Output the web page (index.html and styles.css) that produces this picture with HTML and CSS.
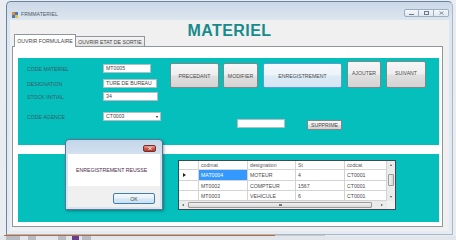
FILE: index.html
```html
<!DOCTYPE html>
<html>
<head>
<meta charset="utf-8">
<title>FRMMATERIEL</title>
<link rel="stylesheet" href="styles.css">
</head>
<body>
<div class="screen">
  <div class="window">
    <div class="titlebar">
      <svg class="appicon" width="6" height="6" viewBox="0 0 6 6">
        <rect x="0" y="0" width="3" height="3" fill="#e58a2a"/>
        <rect x="3" y="0" width="3" height="3" fill="#3d7bd1"/>
        <rect x="0" y="3" width="3" height="3" fill="#3d7bd1"/>
        <rect x="3" y="3" width="3" height="3" fill="#e9c23a"/>
      </svg>
      <span class="wintitle">FRMMATERIEL</span>
      <div class="wctrls">
        <span class="wbtn"><span class="g-min"></span></span>
        <span class="wbtn"><span class="g-max"></span></span>
        <span class="wbtn">
          <svg width="5" height="4" viewBox="0 0 5 4"><path d="M0.5 0.5L4.5 3.5M4.5 0.5L0.5 3.5" stroke="#6b7a8a" stroke-width="0.8"/></svg>
        </span>
      </div>
    </div>
    <div class="client">
      <div class="heading">MATERIEL</div>
      <div class="tabs">
        <div class="tab tab-active">OUVRIR FORMULAIRE</div>
        <div class="tab tab-other">OUVRIR ETAT DE SORTIE</div>
      </div>
      <div class="tabpage">
        <div class="panel panel-form">
          <div class="form">
            <div class="frow r1"><span class="lbl">CODE MATERIEL</span><span class="inp w48">MT0005</span></div>
            <div class="frow r2"><span class="lbl">DESIGNATION</span><span class="inp w54">TURE DE BUREAU</span></div>
            <div class="frow r3"><span class="lbl">STOCK INITIAL</span><span class="inp w55">34</span></div>
            <div class="frow r4"><span class="lbl">CODE AGENCE</span><span class="inp combo w58">CT0003<span class="caret"></span></span></div>
          </div>
          <div class="actions">
            <div class="btnrow">
              <span class="btn b-prec">PRECEDANT</span>
              <span class="btn b-mod">MODIFIER</span>
              <span class="btn b-enr">ENREGISTREMENT</span>
              <span class="btn b-ajo">AJOUTER</span>
              <span class="btn b-sui">SUIVANT</span>
            </div>
            <div class="delrow">
              <span class="inp w48 del-inp"></span>
              <span class="btn b-sup">SUPPRIME</span>
            </div>
          </div>
        </div>
        <div class="panel panel-grid">
          <div class="grid">
            <div class="cell rh"></div>
            <div class="cell hd">codmat</div>
            <div class="cell hd">designation</div>
            <div class="cell hd">St</div>
            <div class="cell hd">codcat</div>
            <div class="vscroll">
              <span class="arr-up"></span>
              <span class="vthumb"></span>
              <span class="arr-down"></span>
            </div>

            <div class="cell rh"><span class="rowmark"></span></div>
            <div class="cell sel">MAT0004</div>
            <div class="cell">MOTEUR</div>
            <div class="cell">4</div>
            <div class="cell">CT0001</div>

            <div class="cell rh"></div>
            <div class="cell">MT0002</div>
            <div class="cell">COMPTEUR</div>
            <div class="cell">1567</div>
            <div class="cell">CT0001</div>

            <div class="cell rh"></div>
            <div class="cell">MT0003</div>
            <div class="cell">VEHICULE</div>
            <div class="cell">6</div>
            <div class="cell">CT0001</div>

            <div class="hscroll">
              <span class="arr-left"></span>
              <span class="hthumb"><span class="grip"></span></span>
              <span class="arr-right"></span>
            </div>
            <div class="corner"></div>
          </div>
        </div>
      </div>
    </div>
  </div>

  <div class="dialog">
    <div class="dtitle">
      <span class="dclose">
        <svg width="4" height="3" viewBox="0 0 4 3"><path d="M0.4 0.3L3.6 2.7M3.6 0.3L0.4 2.7" stroke="#fff" stroke-width="0.9"/></svg>
      </span>
    </div>
    <div class="dbody">ENREGISTREMENT REUSSE</div>
    <div class="dfoot"><span class="btn okbtn">OK</span></div>
  </div>
</div>
<div class="taskbar">
  <div class="tline"><span class="tl-orange"></span><span class="tl-gray"></span></div>
  <div class="titems">
    <span class="ti ti1"></span>
    <span class="ti ti2"></span>
    <span class="ti ti3"></span>
    <span class="ti ti4"></span>
    <span class="ti ti5"></span>
  </div>
</div>
</body>
</html>
```
FILE: styles.css
```css
* { box-sizing: border-box; margin: 0; padding: 0; }
html, body { width: 456px; height: 240px; overflow: hidden; }
body {
  background: #e9edf1;
  font-family: "Liberation Sans", Arial, sans-serif;
  color: #333;
}
.screen { position: relative; height: 235px; padding: 1px 0 0 6px; }

/* main window */
.window {
  width: 447px; height: 234px;
  border: 1px solid;
  border-color: #6c849e #a7b8ca #a7b8ca #6c849e;
  border-radius: 5px 5px 0 0;
  background: linear-gradient(#cbd8e6, #dce6ef 18px, #e4ebf2);
  display: flex; flex-direction: column;
}
.titlebar {
  height: 18px; flex: none;
  display: flex; align-items: flex-start;
  padding: 7px 3px 0 5px;
}
.appicon { margin-top: 3px; flex: none; }
.wintitle {
  margin: 2px 0 0 3px;
  font-size: 5.2px; line-height: 6px; color: #4f5b68;
}
.wctrls { margin-left: auto; display: flex; }
.wbtn {
  width: 15px; height: 8px;
  border: 1px solid #9eaec0;
  background: linear-gradient(#f5f8fb, #dfe7ef);
  display: flex; align-items: center; justify-content: center;
}
.wbtn:first-child { border-radius: 2px 0 0 2px; }
.wbtn:last-child { border-radius: 0 2px 2px 0; }
.wbtn + .wbtn { border-left: none; }
.g-min { width: 5px; height: 1px; background: #6b7a8a; margin-top: 2px; }
.g-max { width: 5px; height: 4px; border: 1px solid #6b7a8a; }

.client {
  flex: 1;
  margin: 0 3px 3px 3px;
  background: #f0f0f0;
  display: flex; flex-direction: column;
}
.heading {
  height: 14px; flex: none;
  padding-top: 4px;
  text-align: center;
  font-size: 16px; line-height: 14px; font-weight: bold;
  letter-spacing: 0.4px;
  color: #178b8c;
}
.tabs {
  height: 12px; flex: none;
  display: flex; align-items: flex-end;
  padding-left: 4px;
  position: relative; z-index: 1;
}
.tab {
  border: 1px solid #8f969e; border-bottom: none;
  font-size: 5.2px; line-height: 6px; color: #444;
  display: flex; align-items: center; justify-content: center;
  white-space: nowrap;
}
.tab-active {
  width: 62px; height: 13px; margin-bottom: -1px;
  background: #fff;
  align-items: flex-end; padding-bottom: 3px;
}
.tab-other {
  width: 69px; height: 10px;
  border-left: none;
  background: linear-gradient(#f5f5f5, #e2e2e2);
}
.tabpage {
  margin-left: 2px;
  width: 431px; height: 181px; flex: none;
  border: 1px solid #8f969e;
  background: #fff;
  padding: 11px 3px 0 5px;
}
.panel { background: #05bfbd; width: 421px; }

/* form panel */
.panel-form { height: 87px; display: flex; padding-left: 9px; }
.form { width: 134px; display: flex; flex-direction: column; flex: none; }
.frow { height: 9px; display: flex; align-items: center; }
.r1 { margin-top: 6px; }
.r2 { margin-top: 6px; }
.r3 { margin-top: 4px; }
.r4 { margin-top: 11px; }
.lbl {
  width: 76px; flex: none;
  font-size: 5.2px; line-height: 6px; color: #3b5a62;
  white-space: nowrap;
}
.inp {
  height: 9px;
  background: #fff;
  border: 1px solid #b3bec4;
  font-size: 5.2px; line-height: 7px; color: #444;
  padding-left: 2px;
  white-space: nowrap; overflow: hidden;
  display: flex; align-items: center;
}
.w48 { width: 48px; }
.w54 { width: 54px; }
.w55 { width: 55px; }
.w58 { width: 58px; }
.combo { position: relative; }
.caret {
  margin-left: auto; margin-right: 2px;
  width: 0; height: 0;
  border-left: 1.5px solid transparent;
  border-right: 1.5px solid transparent;
  border-top: 2px solid #111;
}

.actions { margin-left: 9px; display: flex; flex-direction: column; }
.btnrow { margin-top: 3px; height: 27px; display: flex; align-items: flex-end; }
.btn {
  border: 1px solid #858585;
  border-radius: 2px;
  background: linear-gradient(#f6f6f6 0%, #eeeeee 48%, #e0e0e0 52%, #d3d3d3 100%);
  font-size: 5.2px; line-height: 6px; color: #4a4a4a;
  display: flex; align-items: center; justify-content: center;
  white-space: nowrap;
}
.b-prec { width: 49px; height: 25px; }
.b-mod { width: 35px; height: 25px; margin-left: 4px; }
.b-enr {
  width: 79px; height: 25px; margin-left: 5px;
  border-color: #5c9ed3;
  background: linear-gradient(#f6fafd 0%, #ebf3fa 48%, #deebf6 52%, #d4e5f3 100%);
}
.b-ajo { width: 34px; height: 27px; margin-left: 5px; align-items: flex-start; padding-top: 8px; }
.b-sui { width: 40px; height: 27px; margin-left: 5px; align-items: flex-start; padding-top: 8px; }
.delrow { margin-top: 31px; display: flex; align-items: flex-start; }
.del-inp { margin-left: 67px; }
.b-sup { width: 35px; height: 10px; margin-left: 22px; margin-top: 1px; border-radius: 1px; }

/* grid panel */
.panel-grid { height: 68px; margin-top: 9px; padding: 6px 0 0 160px; }
.grid {
  width: 218px; height: 50px;
  border: 1px solid #3d4852;
  background: #fff;
  display: grid;
  grid-template-columns: 20px 49px 48px 49px 42px 8px;
  grid-template-rows: 9px 11px 10px 10px 8px;
}
.cell {
  border-right: 1px solid #d3d3d3;
  border-bottom: 1px solid #d3d3d3;
  font-size: 5.2px; line-height: 6px; color: #4a4a4a;
  padding-left: 2px;
  display: flex; align-items: center;
  white-space: nowrap; overflow: hidden;
}
.hd { color: #555; }
.rh { padding-left: 4px; }
.sel { background: #3399ff; color: #fff; }
.rowmark {
  width: 0; height: 0;
  border-left: 3px solid #222;
  border-top: 2px solid transparent;
  border-bottom: 2px solid transparent;
}
.vscroll {
  grid-column: 6; grid-row: 1 / 5;
  background: #ebebeb;
  display: flex; flex-direction: column; align-items: center;
}
.arr-up, .arr-down, .arr-left, .arr-right { width: 0; height: 0; flex: none; }
.arr-up {
  margin-top: 3px;
  border-left: 1.5px solid transparent; border-right: 1.5px solid transparent;
  border-bottom: 2px solid #555;
}
.arr-down {
  margin-top: auto; margin-bottom: 3px;
  border-left: 1.5px solid transparent; border-right: 1.5px solid transparent;
  border-top: 2px solid #555;
}
.vthumb {
  margin-top: 8px;
  width: 6px; height: 12px;
  border: 1px solid #9a9a9a; border-radius: 1px;
  background: linear-gradient(90deg, #f2f2f2, #d8d8d8);
}
.hscroll {
  grid-column: 1 / 6; grid-row: 5;
  background: #ebebeb;
  display: flex; align-items: center;
  padding: 0 4px 0 3px;
}
.arr-left {
  border-top: 1.5px solid transparent; border-bottom: 1.5px solid transparent;
  border-right: 2px solid #555;
}
.arr-right {
  margin-left: auto;
  border-top: 1.5px solid transparent; border-bottom: 1.5px solid transparent;
  border-left: 2px solid #555;
}
.hthumb {
  margin-left: 4px;
  width: 184px; height: 6px;
  border: 1px solid #9a9a9a; border-radius: 1px;
  background: linear-gradient(#f2f2f2, #d8d8d8);
  display: flex; align-items: center; justify-content: center;
}
.grip {
  width: 3px; height: 2px;
  border-left: 1px solid #777; border-right: 1px solid #777;
  background: linear-gradient(90deg, transparent 0 0.5px, #777 0.5px 1.5px, transparent 1.5px);
}
.corner { grid-column: 6; grid-row: 5; background: #f0f0f0; }

/* message box */
.dialog {
  position: absolute; left: 65px; top: 139px;
  width: 98px; height: 71px;
  border: 1px solid #5a7591;
  border-radius: 4px 4px 0 0;
  background: linear-gradient(#c4d6ea, #d3e1f0 14px, #d8e4f1);
  padding: 0 2px 2px 2px;
  display: flex; flex-direction: column;
  box-shadow: 1px 1px 3px rgba(0, 0, 0, 0.35);
}
.dtitle { height: 14px; flex: none; display: flex; justify-content: flex-end; padding: 5px 4px 0 0; }
.dclose {
  width: 13px; height: 7px;
  border: 1px solid #7a2d24; border-radius: 2px;
  background: linear-gradient(#e8a89d, #d0594a 50%, #b83a2d);
  display: flex; align-items: center; justify-content: center;
}
.dbody {
  height: 32px; flex: none;
  background: #fff;
  padding-left: 8px;
  display: flex; align-items: center;
  font-size: 5.2px; line-height: 6px; color: #4a2a48;
  white-space: nowrap;
}
.dfoot {
  flex: 1;
  background: #f0f0f0;
  display: flex; justify-content: flex-end; align-items: flex-start;
  padding: 7px 5px 0 0;
}
.okbtn {
  width: 42px; height: 11px;
  border-color: #3c7fb1;
  background: linear-gradient(#f4f9fd 0%, #e6f1fa 48%, #d7e8f5 52%, #cde1f1 100%);
}

/* taskbar strip */
.taskbar { height: 5px; display: flex; flex-direction: column; }
.tline { height: 1px; display: flex; }
.tl-orange { margin-left: 4px; width: 271px; background: #c4692e; }
.tl-gray { width: 50px; background: #c8c8c8; }
.titems { flex: 1; display: flex; background: #e2e5e9; }
.ti { height: 4px; background: #b8bcc2; }
.ti1 { margin-left: 6px; width: 14px; }
.ti2 { margin-left: 8px; width: 8px; }
.ti3 { margin-left: 22px; width: 8px; }
.ti4 { margin-left: 6px; width: 7px; background: #6a3d8a; }
.ti5 { margin-left: 3px; width: 9px; }
```
